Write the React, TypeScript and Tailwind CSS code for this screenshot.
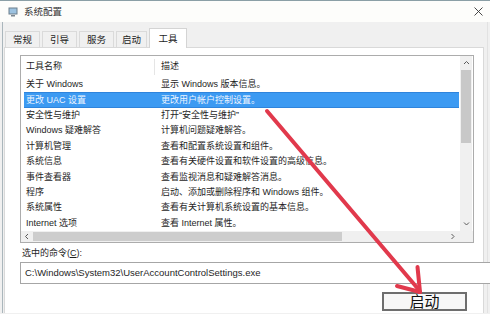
const rows: [string, string][] = [
  ["关于 Windows", "显示 Windows 版本信息。"],
  ["更改 UAC 设置", "更改用户帐户控制设置。"],
  ["安全性与维护", "打开\u201c安全性与维护\u201d"],
  ["Windows 疑难解答", "计算机问题疑难解答。"],
  ["计算机管理", "查看和配置系统设置和组件。"],
  ["系统信息", "查看有关硬件设置和软件设置的高级信息。"],
  ["事件查看器", "查看监视消息和疑难解答消息。"],
  ["程序", "启动、添加或删除程序和 Windows 组件。"],
  ["系统属性", "查看有关计算机系统设置的基本信息。"],
  ["Internet 选项", "查看 Internet 属性。"],
];

const tabs = [
  { label: "常规", w: "w-[35px]" },
  { label: "引导", w: "w-[35px]" },
  { label: "服务", w: "w-[35px]" },
  { label: "启动", w: "w-[31px]" },
];

const Chevron = ({ dir }: { dir: "up" | "down" | "left" | "right" }) => {
  const pts = {
    up: "1,4 3.5,1.5 6,4",
    down: "1,1.5 3.5,4 6,1.5",
    left: "4,1 1.5,3.5 4,6",
    right: "1.5,1 4,3.5 1.5,6",
  }[dir];
  return (
    <svg width="7" height="7" viewBox="0 0 7 7">
      <polyline points={pts} fill="none" stroke="#5a5a5a" strokeWidth="1" />
    </svg>
  );
};

export default function App() {
  return (
    <div className="relative w-[490px] h-[314px] overflow-hidden bg-[#f0f0f0] text-[#1e1e1e] font-['Liberation_Sans','Noto_Sans_CJK_SC',sans-serif]">
      {/* title bar */}
      <div className="h-[22px] bg-[#fdfdfb] border-t border-[#8b9fa6] flex items-center pl-[8px] pr-[7px]">
        <svg width="10" height="10" viewBox="0 0 10 10">
          <rect x="0.5" y="0.5" width="9" height="7" fill="#6d7f8c" />
          <rect x="1.5" y="1.5" width="7" height="5" fill="#9cc2e0" />
          <rect x="3" y="8" width="4" height="1.5" fill="#7b8690" />
        </svg>
        <span className="ml-[6px] text-[9.5px] leading-none text-[#333]">系统配置</span>
        <svg className="ml-auto" width="9" height="9" viewBox="0 0 9 9">
          <path d="M0.5 0.5 L8.5 8.5 M8.5 0.5 L0.5 8.5" stroke="#333" strokeWidth="0.9" />
        </svg>
      </div>

      {/* window body */}
      <div className="ml-[2px] w-[486px] h-[291px] flex flex-col border-l border-r border-l-[#aab6bc] border-r-[#e2e2e2]">
        {/* tabs */}
        <div className="h-[25px] flex items-end pl-[2px] gap-[2px]">
          {tabs.map((t) => (
            <div
              key={t.label}
              className={`${t.w} h-[16px] flex items-center justify-center bg-[#f0f0f0] border border-b-0 border-[#dadada] text-[9.5px] leading-none`}
            >
              {t.label}
            </div>
          ))}
          <div className="w-[38px] h-[20px] -mb-px z-10 flex items-center justify-center bg-white border border-b-0 border-[#d4d4d4] text-[9.5px] leading-none">
            工具
          </div>
        </div>

        {/* tab page */}
        <div className="ml-[1px] w-[480px] flex-1 bg-white border border-b-0 border-[#d9d9d9] flex flex-col">
          {/* list box */}
          <div className="ml-[15px] mt-[7px] w-[454px] h-[188px] border border-[#acacac] flex flex-col">
            <div className="flex flex-1">
              <div className="w-[439px] flex flex-col text-[9px] leading-none">
                <div className="h-[21px] flex items-center">
                  <div className="w-[134px] h-[16px] pl-[5px] flex items-center border-r border-[#e5e5e5]">工具名称</div>
                  <div className="pl-[6px]">描述</div>
                </div>
                {rows.map(([name, desc], i) =>
                  i === 1 ? (
                    <div
                      key={name}
                      className="h-[15.4px] ml-[3px] mr-[1px] flex items-center bg-[#3c9af2] border-y border-[#2f84dc] text-[#eef5ff]"
                    >
                      <div className="w-[131px] pl-[2px]">{name}</div>
                      <div className="pl-[6px]">{desc}</div>
                    </div>
                  ) : (
                    <div key={name} className="h-[15.4px] flex items-center">
                      <div className="w-[134px] pl-[5px]">{name}</div>
                      <div className="pl-[6px]">{desc}</div>
                    </div>
                  )
                )}
              </div>
              {/* vertical scrollbar */}
              <div className="w-[12px] flex flex-col bg-[#f0f0f0]">
                <div className="h-[14px] flex items-center justify-center">
                  <Chevron dir="up" />
                </div>
                <div className="mx-[1px] h-[73px] bg-[#c8c8c8]" />
                <div className="flex-1" />
                <div className="h-[14px] flex items-center justify-center">
                  <Chevron dir="down" />
                </div>
              </div>
            </div>
            {/* horizontal scrollbar */}
            <div className="h-[11px] flex bg-[#f0f0f0]">
              <div className="w-[439px] flex items-center">
                <div className="w-[12px] flex justify-center">
                  <Chevron dir="left" />
                </div>
                <div className="w-[309px] h-[9px] bg-[#cdcdcd]" />
                <div className="flex-1" />
                <div className="w-[14px] flex justify-center">
                  <Chevron dir="right" />
                </div>
              </div>
              <div className="w-[12px]" />
            </div>
          </div>

          <div className="ml-[17px] mt-[3px] h-[14px] flex items-center text-[9px] leading-none">
            选中的命令(<span className="underline">C</span>):
          </div>

          <div className="ml-[15px] mt-[2px] w-[472px] h-[22px] shrink-0 bg-white border border-[#a6a6a6] flex items-center pl-[4px] text-[9.5px] leading-none">
            C:\Windows\System32\UserAccountControlSettings.exe
          </div>

          <div className="mt-[8px] flex justify-end pr-[16px]">
            <div className="w-[85px] h-[19px] border-2 border-[#6e6e6e] bg-[#f7f7f7] flex items-center justify-center text-[15px] leading-none text-[#111]">
              启动
            </div>
          </div>
        </div>
      </div>

      {/* red annotation arrow */}
      <svg className="absolute inset-0 pointer-events-none" width="490" height="314" viewBox="0 0 490 314">
        <g stroke="#e1394c" strokeWidth="4" strokeLinecap="round" fill="none">
          <line x1="267" y1="111" x2="419" y2="290" />
          <line x1="420" y1="292" x2="417.5" y2="267" />
          <line x1="420" y1="292" x2="397" y2="286" />
        </g>
      </svg>
    </div>
  );
}
